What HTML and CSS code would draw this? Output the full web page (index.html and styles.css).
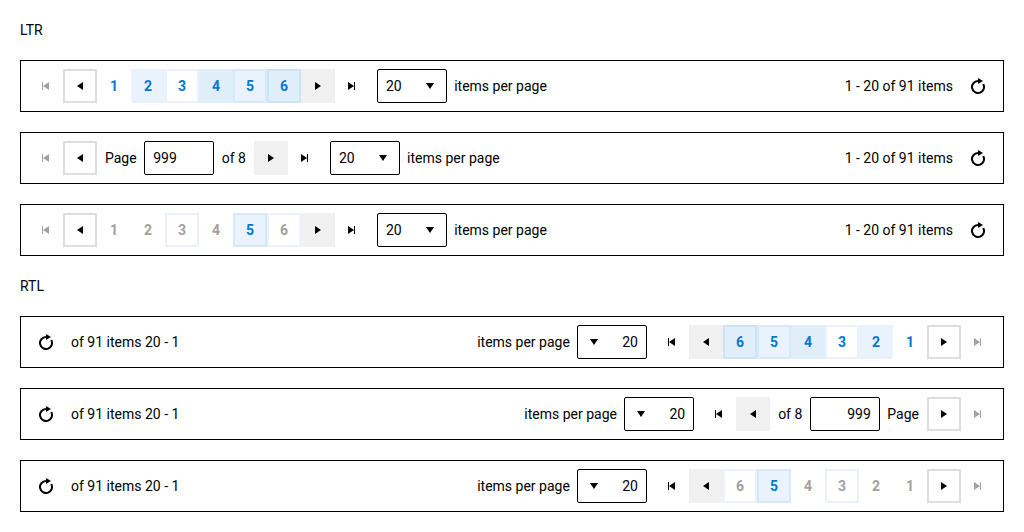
FILE: index.html
```
<!DOCTYPE html>
<html lang="en">
<head>
<meta charset="utf-8">
<title>Pager</title>
<link rel="stylesheet" href="styles.css">
</head>
<body>
<svg class="sprite" aria-hidden="true">
  <symbol id="left" viewBox="0 0 16 16"><path d="M11 4v8L5 8z"/></symbol>
  <symbol id="right" viewBox="0 0 16 16"><path d="M5 4v8l6-4z"/></symbol>
  <symbol id="start" viewBox="0 0 16 16"><path d="M4 4h1v8H4zM11 4v8L5 8z"/></symbol>
  <symbol id="end" viewBox="0 0 16 16"><path d="M10 4h1v8h-1zM4 4v8l6-4z"/></symbol>
  <symbol id="down" viewBox="0 0 16 16"><path d="M4 5h8l-4 6z"/></symbol>
  <symbol id="reload" viewBox="0 0 16 16"><path d="M8 0l5 3-5 3z"/><path d="M8.500 3H8a6 6 0 1 0 5.200 3" fill="none" stroke="currentColor" stroke-width="2"/></symbol>
</svg>
<main class="page">
  <div class="title">LTR</div>
  <div class="pager">
    <button class="btn disabled"><svg class="icon"><use href="#start"/></svg></button>
    <button class="btn focus"><svg class="icon"><use href="#left"/></svg></button>
    <div class="numbers">
      <button class="btn num">1</button><button class="btn num hover">2</button><button class="btn num focus">3</button><button class="btn num selected">4</button><button class="btn num hover edge">5</button><button class="btn num selected edge">6</button>
    </div>
    <button class="btn hover"><svg class="icon"><use href="#right"/></svg></button>
    <button class="btn"><svg class="icon"><use href="#end"/></svg></button>
    <div class="sizes"><span class="box"><span>20</span><svg class="icon"><use href="#down"/></svg></span><span>items per page</span></div>
    <div class="info">1 - 20 of 91 items</div>
    <button class="btn reload"><svg class="icon"><use href="#reload"/></svg></button>
  </div>
  <div class="pager">
    <button class="btn disabled"><svg class="icon"><use href="#start"/></svg></button>
    <button class="btn focus"><svg class="icon"><use href="#left"/></svg></button>
    <div class="entry"><span>Page</span><span class="box">999</span><span>of 8</span></div>
    <button class="btn hover"><svg class="icon"><use href="#right"/></svg></button>
    <button class="btn"><svg class="icon"><use href="#end"/></svg></button>
    <div class="sizes"><span class="box"><span>20</span><svg class="icon"><use href="#down"/></svg></span><span>items per page</span></div>
    <div class="info">1 - 20 of 91 items</div>
    <button class="btn reload"><svg class="icon"><use href="#reload"/></svg></button>
  </div>
  <div class="pager">
    <button class="btn disabled"><svg class="icon"><use href="#start"/></svg></button>
    <button class="btn focus"><svg class="icon"><use href="#left"/></svg></button>
    <div class="numbers">
      <button class="btn num disabled">1</button><button class="btn num disabled">2</button><button class="btn num focus disabled">3</button><button class="btn num disabled">4</button><button class="btn num hover edge">5</button><button class="btn num focus disabled">6</button>
    </div>
    <button class="btn hover"><svg class="icon"><use href="#right"/></svg></button>
    <button class="btn"><svg class="icon"><use href="#end"/></svg></button>
    <div class="sizes"><span class="box"><span>20</span><svg class="icon"><use href="#down"/></svg></span><span>items per page</span></div>
    <div class="info">1 - 20 of 91 items</div>
    <button class="btn reload"><svg class="icon"><use href="#reload"/></svg></button>
  </div>
  <div class="title">RTL</div>
  <div class="pager" dir="rtl">
    <button class="btn disabled"><svg class="icon"><use href="#end"/></svg></button>
    <button class="btn focus"><svg class="icon"><use href="#right"/></svg></button>
    <div class="numbers">
      <button class="btn num">1</button><button class="btn num hover">2</button><button class="btn num focus">3</button><button class="btn num selected">4</button><button class="btn num hover edge">5</button><button class="btn num selected edge">6</button>
    </div>
    <button class="btn hover"><svg class="icon"><use href="#left"/></svg></button>
    <button class="btn"><svg class="icon"><use href="#start"/></svg></button>
    <div class="sizes"><span class="box"><span>20</span><svg class="icon"><use href="#down"/></svg></span><span>items per page</span></div>
    <div class="info">1 - 20 of 91 items</div>
    <button class="btn reload"><svg class="icon"><use href="#reload"/></svg></button>
  </div>
  <div class="pager" dir="rtl">
    <button class="btn disabled"><svg class="icon"><use href="#end"/></svg></button>
    <button class="btn focus"><svg class="icon"><use href="#right"/></svg></button>
    <div class="entry"><span>Page</span><span class="box">999</span><span>of 8</span></div>
    <button class="btn hover"><svg class="icon"><use href="#left"/></svg></button>
    <button class="btn"><svg class="icon"><use href="#start"/></svg></button>
    <div class="sizes"><span class="box"><span>20</span><svg class="icon"><use href="#down"/></svg></span><span>items per page</span></div>
    <div class="info">1 - 20 of 91 items</div>
    <button class="btn reload"><svg class="icon"><use href="#reload"/></svg></button>
  </div>
  <div class="pager" dir="rtl">
    <button class="btn disabled"><svg class="icon"><use href="#end"/></svg></button>
    <button class="btn focus"><svg class="icon"><use href="#right"/></svg></button>
    <div class="numbers">
      <button class="btn num disabled">1</button><button class="btn num disabled">2</button><button class="btn num focus disabled">3</button><button class="btn num disabled">4</button><button class="btn num hover edge">5</button><button class="btn num focus disabled">6</button>
    </div>
    <button class="btn hover"><svg class="icon"><use href="#left"/></svg></button>
    <button class="btn"><svg class="icon"><use href="#start"/></svg></button>
    <div class="sizes"><span class="box"><span>20</span><svg class="icon"><use href="#down"/></svg></span><span>items per page</span></div>
    <div class="info">1 - 20 of 91 items</div>
    <button class="btn reload"><svg class="icon"><use href="#reload"/></svg></button>
  </div>
</main>
</body>
</html>
```
FILE: styles.css
```
* { box-sizing: border-box; }
body { margin: 0; background: #fff; color: #000; font: 14px/20px Roboto, sans-serif; }
.sprite { display: none; }
.page { display: flex; flex-direction: column; gap: 20px; padding: 20px; }
.pager { display: flex; align-items: center; padding: 8px; border: 1px solid #000; }
.numbers, .entry, .sizes { display: flex; align-items: center; }
.entry { gap: 7.5px; padding: 0 8px; }
.sizes { gap: 7.2px; padding: 0 8px; }
.btn {
  display: flex; align-items: center; justify-content: center; flex: none;
  width: 34px; height: 34px; padding: 0; border: 2px solid transparent;
  background: transparent; color: #000; font: inherit;
}
.icon { display: block; flex: none; width: 16px; height: 16px; fill: currentColor; }
.btn.hover { background: #f0f0f0; }
.btn.focus { border-color: #dedede; }
.btn.num { color: #0078d4; font-weight: 700; }
.btn.num.hover { background: #eaf3fd; }
.btn.num.focus { border-color: #eaf3fd; }
.btn.num.selected { background: #e0eefa; }
.btn.num.hover.edge { border-color: #d6e9f8; }
.btn.num.selected.edge { border-color: #cce4f7; }
.btn.disabled, .btn.num.disabled { color: #a1a1a1; }
.box {
  display: flex; align-items: center; justify-content: space-between;
  width: 70px; height: 34px; padding: 0 8px; border: 1px solid #000; border-radius: 2px;
}
.info { margin-inline: auto 8px; }
```
